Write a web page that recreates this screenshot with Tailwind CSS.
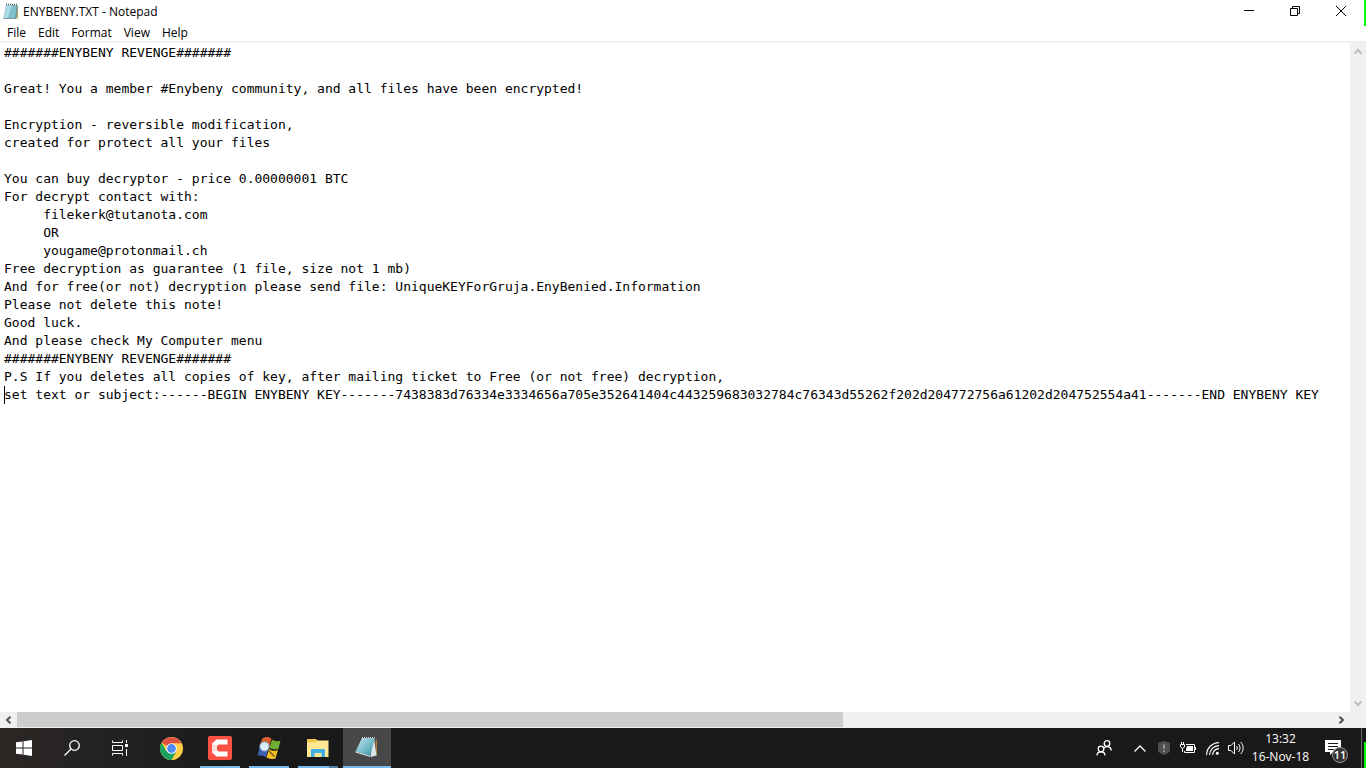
<!DOCTYPE html>
<html lang="en">
<head>
    <meta charset="UTF-8">
    <meta name="viewport" content="width=device-width, initial-scale=1.0">
    <script src="https://cdn.jsdelivr.net/npm/@tailwindcss/browser@4"></script>
    <title>ENYBENY.TXT - Notepad</title>
</head>
<body class="relative flex h-screen flex-col overflow-hidden bg-white font-['Open_Sans','Noto_Sans',sans-serif] text-[12px] text-black">

    <!-- Title bar -->
    <header class="flex h-[22px] shrink-0 items-center pl-[3px]">
        <svg class="h-4 w-4" viewBox="0 0 16 16">
            <path d="M13 3H15V15.500H12z" fill="#b9a878"/>
            <path d="M3 2H14L12.500 15H0.500z" fill="#7fc0cb"/>
            <path d="M3 2H9L5 15H0.500z" fill="#a9dbe2"/>
            <path d="M3 1.500H14" stroke="#555" stroke-width="1.500" stroke-dasharray="1 1"/>
            <path d="M0.500 15.500H12.500L14.500 2.500" stroke="#4a7f8b" stroke-width="0.800" fill="none"/>
        </svg>
        <h1 class="ml-1 flex-1 pt-px">ENYBENY.TXT - Notepad</h1>
        <button class="flex h-full w-[46px] items-center justify-center" aria-label="Minimize">
            <svg class="h-[10px] w-[10px]" viewBox="0 0 10 10"><path d="M0 4.500H10" stroke="#000"/></svg>
        </button>
        <button class="flex h-full w-[46px] items-center justify-center" aria-label="Restore">
            <svg class="h-[10px] w-[10px]" viewBox="0 0 10 10" fill="none" stroke="#000"><path d="M0.500 2.500H7.500V9.500H0.500zM2.500 2.500V0.500H9.500V7.500H7.500"/></svg>
        </button>
        <button class="mr-[2px] flex h-full w-[46px] items-center justify-center" aria-label="Close">
            <svg class="h-[10px] w-[10px]" viewBox="0 0 10 10"><path d="M0 0L10 10M10 0L0 10" stroke="#000"/></svg>
        </button>
    </header>

    <!-- Menu -->
    <nav class="flex h-[21px] shrink-0 items-center border-b-2 border-[#f0f0f0] pt-[2px] pl-px">
        <button class="px-[6px]">File</button>
        <button class="px-[6px]">Edit</button>
        <button class="px-[6px]">Format</button>
        <button class="px-[6px]">View</button>
        <button class="px-[6px]">Help</button>
    </nav>

    <!-- Document -->
    <main class="flex min-h-0 flex-1">
        <div class="relative min-w-0 flex-1 px-1 pt-px">
            <textarea aria-label="Document" wrap="off" spellcheck="false" class="block h-full w-full resize-none overflow-hidden whitespace-pre font-['DejaVu_Sans_Mono',monospace] text-[13px] leading-[18px] outline-none">#######ENYBENY REVENGE#######

Great! You a member #Enybeny community, and all files have been encrypted!

Encryption - reversible modification,
created for protect all your files

You can buy decryptor - price 0.00000001 BTC
For decrypt contact with:
     filekerk@tutanota.com
     OR
     yougame@protonmail.ch
Free decryption as guarantee (1 file, size not 1 mb)
And for free(or not) decryption please send file: UniqueKEYForGruja.EnyBenied.Information
Please not delete this note!
Good luck.
And please check My Computer menu
#######ENYBENY REVENGE#######
P.S If you deletes all copies of key, after mailing ticket to Free (or not free) decryption,
set text or subject:------BEGIN ENYBENY KEY-------7438383d76334e3334656a705e352641404c443259683032784c76343d55262f202d204772756a61202d204752554a41-------END ENYBENY KEY</textarea>
            <!-- Text caret, line 20 -->
            <span class="absolute top-[343px] left-1 h-[18px] w-px bg-black"></span>
        </div>
        <div class="flex w-4 shrink-0 flex-col justify-between bg-[#f0f0f0]">
            <button class="flex h-[17px] items-center justify-center" aria-label="Scroll up">
                <svg class="h-[7px] w-[8px]" viewBox="0 0 8 7"><path d="M0.700 5.500L4 2L7.300 5.500" fill="none" stroke="#bcbcbc" stroke-width="2"/></svg>
            </button>
            <button class="flex h-[17px] items-center justify-center" aria-label="Scroll down">
                <svg class="h-[7px] w-[8px]" viewBox="0 0 8 7"><path d="M0.700 1.500L4 5L7.300 1.500" fill="none" stroke="#bcbcbc" stroke-width="2"/></svg>
            </button>
        </div>
    </main>
    <div class="flex h-4 shrink-0 bg-[#f0f0f0] pr-4">
        <button class="flex w-[17px] items-center justify-center" aria-label="Scroll left">
            <svg class="h-[8px] w-[7px]" viewBox="0 0 7 8"><path d="M5.500 0.700L2 4L5.500 7.300" fill="none" stroke="#505050" stroke-width="2"/></svg>
        </button>
        <div class="flex-1"><div class="h-[15px] w-[62.8%] bg-[#cdcdcd]"></div></div>
        <button class="flex w-[17px] items-center justify-center" aria-label="Scroll right">
            <svg class="h-[8px] w-[7px]" viewBox="0 0 7 8"><path d="M1.500 0.700L5 4L1.500 7.300" fill="none" stroke="#505050" stroke-width="2"/></svg>
        </button>
    </div>

    <!-- Taskbar -->
    <footer class="flex h-10 shrink-0 justify-between bg-[#191919] bg-linear-to-r from-[#2b2826] to-[#191919] to-20% text-white">
        <div class="flex">
            <button class="flex w-12 items-center justify-center" aria-label="Start">
                <svg class="h-4 w-4" viewBox="0 0 16 16" fill="#fff"><path d="M0 2.300L6.500 1.400V7.500H0zM7.500 1.200L16 0V7.500H7.500zM0 8.500H6.500V14.600L0 13.700zM7.500 8.500H16V16L7.500 14.800z"/></svg>
            </button>
            <button class="flex w-12 items-center justify-center" aria-label="Search">
                <svg class="h-4 w-4" viewBox="0 0 16 16" fill="none" stroke="#fff" stroke-width="1.300"><circle cx="10.500" cy="5.500" r="4.800"/><path d="M7 9L0.500 15.500"/></svg>
            </button>
            <button class="flex w-[51px] items-center pl-4" aria-label="Task view">
                <svg class="h-4 w-4" viewBox="0 0 16 16" fill="none" stroke="#fff"><path d="M0.500 0.500V2.500H10.500V0.500M0.500 15.500V13.500H10.500V15.500M0.500 5.500H10.500V10.500H0.500zM14.500 0V3M14.500 9V16"/><path d="M13 4H16V7H13z" fill="#fff" stroke="none"/></svg>
            </button>
            <div class="flex gap-px">
                <button class="flex w-12 items-center justify-center" aria-label="Chrome">
                    <svg class="h-[23px] w-[23px]" viewBox="0 0 24 24">
                        <circle cx="12" cy="12" r="12" fill="#ffcd46"/>
                        <path d="M12 12L1.600 6A12 12 0 0 1 22.400 6.500H12z" fill="#de5246"/>
                        <path d="M1.600 6A12 12 0 0 0 12 24L17 15L12 12L6.500 14.500z" fill="#1aa260"/>
                        <circle cx="12" cy="12" r="5.500" fill="#fff"/>
                        <circle cx="12" cy="12" r="4.600" fill="#4c8bf5"/>
                    </svg>
                </button>
                <button class="flex w-12 flex-col items-center px-1 pt-2" aria-label="Camtasia">
                    <svg class="h-6 w-6" viewBox="0 0 24 24">
                        <rect width="24" height="24" rx="2" fill="#fb5144"/>
                        <path d="M19.500 3.500H8.500L4 7.500V16.500L8.500 20.500H19.500V15.500H10.500L9 14V10L10.500 8.500H19.500z" fill="#fff"/>
                        <path d="M4 7.500L9 10V14L4 16.500z" fill="#f8dedb"/>
                    </svg>
                    <span class="mt-auto h-[2px] w-full bg-[#76b9ed]"></span>
                </button>
                <button class="flex w-12 flex-col items-center px-1 pt-2" aria-label="System tool">
                    <svg class="h-6 w-6" viewBox="0 0 24 24">
                        <path d="M5 3C8 0.500 11 0.500 14.500 2.500L12 11.500C8.500 9.500 6 9.500 2.500 11z" fill="#d9602b"/>
                        <path d="M15 3.500C18 5.500 21 5.500 23.500 4.500L21.500 13C18.500 14 15.500 13.500 12.500 12z" fill="#6fae35"/>
                        <path d="M2.500 12C5.500 11 8.500 11.500 11.500 12.500L9 21.500C6 19.500 3 19 0.500 20z" fill="#3c5fb0"/>
                        <path d="M12 13C15 15 18 15.500 21 14L18.500 22.500C15.500 23.500 12 23 9.500 21.500z" fill="#f4c020"/>
                        <circle cx="7.500" cy="10.500" r="4.600" fill="#d9effc" stroke="#8fb0cc"/>
                        <path d="M11 14L17.500 20.500" stroke="#7a5a20" stroke-width="1.500"/>
                    </svg>
                    <span class="mt-auto h-[2px] w-full bg-[#76b9ed]"></span>
                </button>
                <button class="flex w-12 flex-col items-center px-1 pt-2" aria-label="File Explorer">
                    <svg class="h-6 w-6" viewBox="0 0 24 24">
                        <path d="M1 3H10L12 5H22V21H1z" fill="#f1c64b"/>
                        <path d="M11 4.500H22.500V21H1V6.500H10z" fill="#ffe794"/>
                        <path d="M5 21V13H19V21H15.500V17H8.500V21z" fill="#3fb0e4"/>
                    </svg>
                    <span class="mt-auto h-[2px] w-full border-r-[9px] border-[#4f7fa5] bg-[#76b9ed]"></span>
                </button>
                <button class="flex w-12 flex-col items-center bg-[#474747] pt-2" aria-label="Notepad">
                    <svg class="h-6 w-6" viewBox="0 0 24 24">
                        <defs>
                            <linearGradient id="page" x1="0" y1="0" x2="1" y2="1">
                                <stop offset="0" stop-color="#c3e4ea"/>
                                <stop offset="0.500" stop-color="#7dbfcc"/>
                                <stop offset="1" stop-color="#3b8fa2"/>
                            </linearGradient>
                        </defs>
                        <path d="M20.500 2.500L22 4V18L21 19.500z" fill="#a98243"/>
                        <path d="M19 2L21.500 19.500L16 21L15 10z" fill="#dfe5e6"/>
                        <path d="M7 2H19.500L15.500 20L0.500 15.500z" fill="url(#page)"/>
                        <path d="M0.500 15.500L15.500 20V21L0.500 16.500z" fill="#e8eef0"/>
                        <path d="M7 1.500H20" stroke="#ccc" stroke-dasharray="1 1"/>
                    </svg>
                    <span class="mt-auto h-[2px] w-full bg-[#76b9ed]"></span>
                </button>
            </div>
        </div>

        <!-- Tray -->
        <div class="flex">
            <button class="flex w-12 items-center justify-center" aria-label="People">
                <svg class="h-4 w-4" viewBox="0 0 16 16" fill="none" stroke="#fff" stroke-width="1.300"><circle cx="11" cy="3.500" r="2.800"/><path d="M8 8C9.500 6 15 5.500 15.200 10.500"/><circle cx="5" cy="9" r="2.800"/><path d="M1 15.500C1 10.700 9 10.700 9 15.500"/></svg>
            </button>
            <button class="flex w-6 items-center justify-center" aria-label="Show hidden icons">
                <svg class="h-[7px] w-[12px]" viewBox="0 0 12 7"><path d="M0.500 6.500L6 1L11.500 6.500" fill="none" stroke="#fff" stroke-width="1.300"/></svg>
            </button>
            <button class="flex w-6 items-center justify-center" aria-label="Security">
                <svg class="h-[14px] w-[12px]" viewBox="0 0 12 14"><path d="M6 0L12 2V9C12 11 9 13 6 14C3 13 0 11 0 9V2z" fill="#505050"/><path d="M6 3.500V8M6 9.500V11" stroke="#aaa" stroke-width="1.500"/></svg>
            </button>
            <button class="flex w-6 items-center justify-center" aria-label="Battery">
                <svg class="h-[12px] w-4" viewBox="0 0 16 12"><path d="M6 2.500H14.500V10.500H4.500V9" fill="none" stroke="#fff"/><path d="M7 4H13V9H6V7zM15 5H16V8H15z" fill="#fff"/><path d="M0.500 2.500H4.500V5L2.500 6.500L0.500 5zM2.500 6.500V10M1.500 0V2M3.500 0V2" fill="none" stroke="#fff"/></svg>
            </button>
            <button class="flex w-6 items-center justify-center" aria-label="Network">
                <svg class="h-[13px] w-[13px]" viewBox="0 0 13 13" fill="none" stroke="#fff" stroke-width="1.200"><path d="M0.600 13A12.400 12.400 0 0 1 13 0.600M3.600 13A9.400 9.400 0 0 1 13 3.600M6.600 13A6.400 6.400 0 0 1 13 6.600"/><circle cx="11.300" cy="11.300" r="1.500" fill="#fff" stroke="none"/></svg>
            </button>
            <button class="flex w-6 items-center justify-center" aria-label="Volume">
                <svg class="h-[14px] w-4" viewBox="0 0 16 14" fill="none" stroke="#fff"><path d="M0.500 4.500H3L6.500 1V13L3 9.500H0.500zM8.500 5C9.500 6 9.500 8 8.500 9M10.500 3C12.500 5 12.500 9 10.500 11M12.500 1C16 4 16 10 12.500 13"/></svg>
            </button>
            <button class="flex w-[65px] flex-col items-center pt-[2px] leading-[18px]">
                <span>13:32</span>
                <span>16-Nov-18</span>
            </button>
            <button class="relative flex w-12 items-start pt-3 pl-3" aria-label="Notifications">
                <svg class="h-[15px] w-4" viewBox="0 0 16 15"><path d="M0 0H16V12H8L5 15V12H0z" fill="#fff"/><path d="M3 3.500H13M3 6.500H13M3 9.500H9" stroke="#191919"/></svg>
                <span class="absolute top-[19px] left-[19px] flex h-4 w-4 items-center justify-center rounded-full border border-[#999] bg-[#333] text-[11px] font-semibold">11</span>
            </button>
            <button class="w-[5px] border-l border-[#6a6a6a]" aria-label="Show desktop"></button>
        </div>
    </footer>

    <!-- Screen edge markers -->
    <span class="absolute top-0 right-0 h-[26px] w-[2px] bg-[#00ff00]"></span>
    <span class="absolute right-0 bottom-0 h-[26px] w-[2px] bg-[#00ff00]"></span>
</body>
</html>
